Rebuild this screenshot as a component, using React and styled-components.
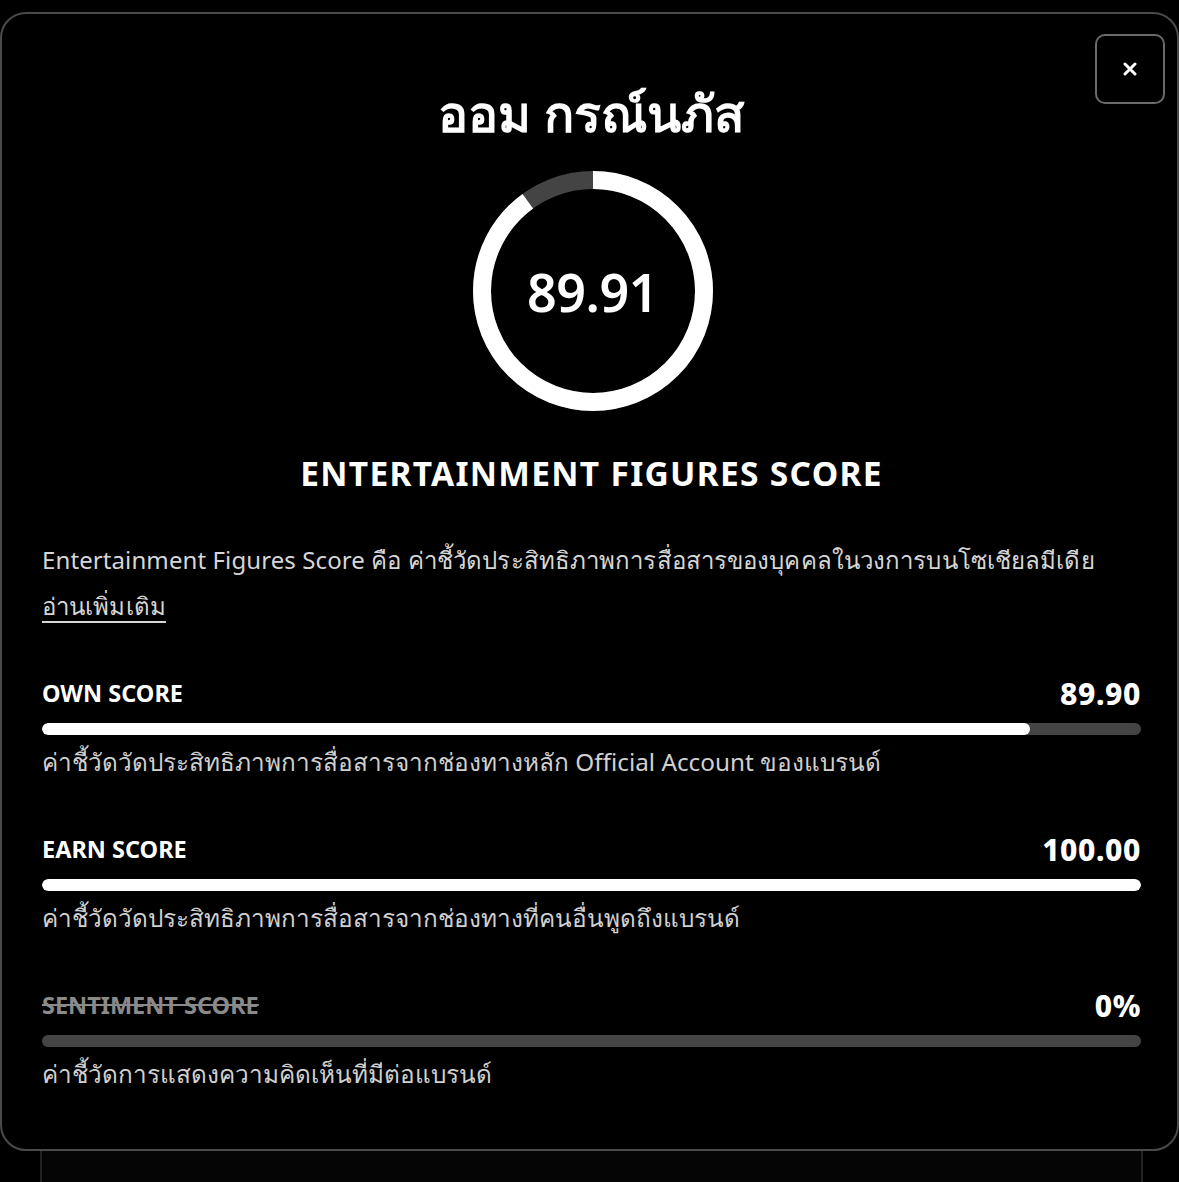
import React from "react";
import styled, { createGlobalStyle } from "styled-components";

const Global = createGlobalStyle`
  html, body { margin: 0; padding: 0; background: #000; }
  body { font-family: "Noto Sans", "Open Sans", sans-serif; color: #fff; overflow: hidden; }
`;

const Page = styled.div`
  width: 1179px;
  height: 1182px;
  background: #000;
  padding-top: 12px;
  box-sizing: border-box;
  overflow: hidden;
`;

const Modal = styled.div`
  position: relative;
  box-sizing: border-box;
  width: 1179px;
  height: 1139px;
  border: 2px solid #4a4a4a;
  border-radius: 26px;
  background: #000;
  padding: 0 36px 0 40px;
  display: flex;
  flex-direction: column;
  z-index: 1;
`;

const CloseButton = styled.button`
  position: absolute;
  top: 20px;
  right: 12px;
  width: 70px;
  height: 70px;
  border: 2px solid #6a6a6a;
  border-radius: 10px;
  background: #000;
  color: #fff;
  display: flex;
  align-items: center;
  justify-content: center;
  padding: 0;
`;

const Title = styled.h1`
  margin: 71px 0 0;
  text-align: center;
  font-size: 50px;
  line-height: 56px;
  font-weight: 700;
`;

const RingWrap = styled.div`
  position: relative;
  width: 240px;
  height: 240px;
  margin: 30px auto 0;
  left: 1px;
`;

const RingValue = styled.div`
  position: absolute;
  inset: 0;
  display: flex;
  align-items: center;
  justify-content: center;
  font-size: 52px;
  font-weight: 600;
  letter-spacing: -0.5px;
`;

const Heading = styled.h2`
  margin: 42px 0 0;
  text-align: center;
  font-size: 33.5px;
  line-height: 40px;
  font-weight: 700;
  letter-spacing: 1.3px;
`;

const Intro = styled.p`
  margin: 44px 0 0;
  font-size: 24px;
  line-height: 46px;
  letter-spacing: 0.1px;
  color: #d6d6d6;
`;

const ReadMore = styled.a`
  color: #d6d6d6;
  text-decoration: underline;
  text-underline-offset: 6px;
`;

const ScoreList = styled.div`
  display: flex;
  flex-direction: column;
  gap: 55px;
  margin-top: 48px;
`;

const ScoreRow = styled.div`
  display: flex;
  flex-direction: column;
`;

const ScoreHead = styled.div`
  display: flex;
  justify-content: space-between;
  align-items: center;
  height: 32px;
`;

const ScoreLabel = styled.span`
  font-size: 23.5px;
  font-weight: 700;
  color: ${(p) => (p.$disabled ? "#8a8a8a" : "#fff")};
  text-decoration: ${(p) => (p.$disabled ? "line-through" : "none")};
`;

const ScoreValue = styled.span`
  font-size: 30px;
  font-weight: 800;
  letter-spacing: 0.6px;
`;

const Track = styled.div`
  margin-top: 14px;
  height: 12px;
  border-radius: 6px;
  background: #444;
  overflow: hidden;
`;

const Fill = styled.div`
  height: 100%;
  border-radius: 6px;
  background: #fff;
`;

const ScoreDesc = styled.div`
  margin-top: 11px;
  font-size: 24.3px;
  line-height: 32px;
  color: #d0d0d0;
`;

const Behind = styled.div`
  margin: -2px 36px 0 40px;
  height: 40px;
  border: 2px solid #222;
  border-top: none;
  background: #050505;
`;

const scores = [
  {
    label: "OWN SCORE",
    value: "89.90",
    pct: 89.9,
    desc: "ค่าชี้วัดวัดประสิทธิภาพการสื่อสารจากช่องทางหลัก Official Account ของแบรนด์",
  },
  {
    label: "EARN SCORE",
    value: "100.00",
    pct: 100,
    desc: "ค่าชี้วัดวัดประสิทธิภาพการสื่อสารจากช่องทางที่คนอื่นพูดถึงแบรนด์",
  },
  {
    label: "SENTIMENT SCORE",
    value: "0%",
    pct: 0,
    disabled: true,
    desc: "ค่าชี้วัดการแสดงความคิดเห็นที่มีต่อแบรนด์",
  },
];

function Ring({ value }) {
  const r = 111;
  const c = 2 * Math.PI * r;
  const filled = (value / 100) * c;
  return (
    <RingWrap>
      <svg width="240" height="240" viewBox="0 0 240 240">
        <circle cx="120" cy="120" r={r} fill="none" stroke="#444" strokeWidth="18" />
        <circle
          cx="120"
          cy="120"
          r={r}
          fill="none"
          stroke="#fff"
          strokeWidth="18"
          strokeDasharray={`${filled} ${c}`}
          transform="rotate(-90 120 120)"
        />
      </svg>
      <RingValue>{value.toFixed(2)}</RingValue>
    </RingWrap>
  );
}

export default function App() {
  return (
    <Page>
      <Global />
      <Modal>
        <CloseButton aria-label="close">
          <svg width="14" height="14" viewBox="0 0 14 14">
            <path d="M2 2 L12 12 M12 2 L2 12" stroke="#fff" strokeWidth="3" strokeLinecap="round" />
          </svg>
        </CloseButton>
        <Title>ออม กรณ์นภัส</Title>
        <Ring value={89.91} />
        <Heading>ENTERTAINMENT FIGURES SCORE</Heading>
        <Intro>
          Entertainment Figures Score คือ ค่าชี้วัดประสิทธิภาพการสื่อสารของบุคคลในวงการบนโซเชียลมีเดีย
          <br />
          <ReadMore href="#">อ่านเพิ่มเติม</ReadMore>
        </Intro>
        <ScoreList>
          {scores.map((s) => (
            <ScoreRow key={s.label}>
              <ScoreHead>
                <ScoreLabel $disabled={s.disabled}>{s.label}</ScoreLabel>
                <ScoreValue>{s.value}</ScoreValue>
              </ScoreHead>
              <Track>
                <Fill style={{ width: `${s.pct}%` }} />
              </Track>
              <ScoreDesc>{s.desc}</ScoreDesc>
            </ScoreRow>
          ))}
        </ScoreList>
      </Modal>
      <Behind />
    </Page>
  );
}
